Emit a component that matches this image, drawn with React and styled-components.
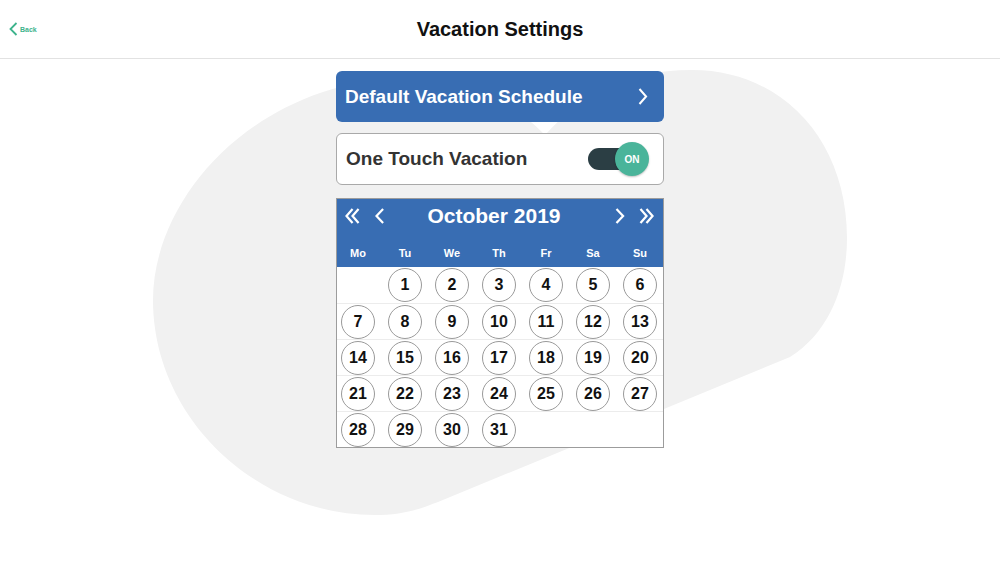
import React from "react";
import styled, { createGlobalStyle } from "styled-components";

const GlobalStyle = createGlobalStyle`
  html, body {
    margin: 0;
    padding: 0;
    background: #ffffff;
    font-family: "Liberation Sans", Arial, sans-serif;
  }
`;

const Page = styled.div`
  position: relative;
  width: 1000px;
  height: 587px;
  overflow: hidden;
  background: #ffffff;
`;

const Blob = styled.svg`
  position: absolute;
  left: 0;
  top: 0;
  width: 1000px;
  height: 587px;
  z-index: 0;
`;

const Header = styled.header`
  position: relative;
  z-index: 1;
  height: 58px;
  border-bottom: 1px solid #e2e2e2;
  background: #ffffff;
  display: grid;
  grid-template-columns: 1fr auto 1fr;
  align-items: center;
`;

const BackLink = styled.a`
  display: flex;
  align-items: center;
  gap: 2px;
  padding-left: 9px;
  color: #3db38c;
  font-size: 7px;
  font-weight: bold;
  text-decoration: none;
  cursor: pointer;
`;

const Title = styled.h1`
  margin: 0;
  font-size: 20px;
  font-weight: bold;
  color: #111111;
`;

const Content = styled.main`
  position: relative;
  z-index: 1;
  width: 328px;
  margin: 12px auto 0;
  display: flex;
  flex-direction: column;
`;

const NavButton = styled.button`
  height: 51px;
  border: none;
  border-radius: 6px;
  background: #386db3;
  color: #ffffff;
  font-family: inherit;
  font-size: 19px;
  font-weight: bold;
  display: flex;
  align-items: center;
  justify-content: space-between;
  padding: 0 14px 0 9px;
  cursor: pointer;
`;

const ToggleCard = styled.div`
  margin-top: 11px;
  height: 50px;
  border: 1px solid #a9a9a9;
  border-radius: 6px;
  background: #ffffff;
  display: flex;
  align-items: center;
  justify-content: space-between;
  padding: 0 14px 0 9px;
  font-size: 19px;
  font-weight: bold;
  color: #333333;
`;

const Switch = styled.div`
  position: relative;
  width: 61px;
  height: 34px;
  display: flex;
  align-items: center;
`;

const Track = styled.div`
  width: 53px;
  height: 22px;
  border-radius: 11px;
  background: ${(p) => (p.on ? "#2b3e44" : "#bbbbbb")};
`;

const Knob = styled.div`
  position: absolute;
  right: 0;
  top: 0;
  width: 34px;
  height: 34px;
  border-radius: 50%;
  background: #4ab49a;
  box-shadow: 0 1px 2px rgba(0, 0, 0, 0.25);
  color: #ffffff;
  font-size: 10px;
  font-weight: bold;
  display: flex;
  align-items: center;
  justify-content: center;
`;

const Calendar = styled.section`
  margin-top: 13px;
  border: 1px solid #9c9c9c;
  background: #ffffff;
  overflow: hidden;
`;

const CalHead = styled.div`
  background: #386db3;
  color: #ffffff;
`;

const MonthRow = styled.div`
  height: 34px;
  display: flex;
  align-items: center;
  padding: 0 7px 0 8px;
`;

const NavGroup = styled.div`
  display: flex;
  align-items: center;
  gap: ${(p) => p.gap}px;
`;

const MonthTitle = styled.div`
  flex: 1;
  text-align: center;
  font-size: 21px;
  font-weight: bold;
  padding-right: 14px;
`;

const Grid = styled.div`
  display: grid;
  grid-template-columns: repeat(7, 47px);
`;

const DayName = styled.div`
  height: 28px;
  padding: 6px 9px 0 4px;
  display: flex;
  align-items: center;
  justify-content: center;
  font-size: 11px;
  font-weight: bold;
`;

const Cell = styled.div`
  height: 36px;
  padding-left: 4px;
  display: flex;
  align-items: center;
  justify-content: flex-start;
  border-top: ${(p) => (p.first ? "none" : "1px solid #ececec")};
  box-sizing: border-box;
`;

const Day = styled.div`
  width: 32px;
  height: 32px;
  border-radius: 50%;
  border: 1px solid #9a9a9a;
  display: flex;
  align-items: center;
  justify-content: center;
  font-size: 16px;
  font-weight: bold;
  color: #111111;
`;

const Chevron = ({ dir = "right", double = false, w = 10, h = 15, stroke = 2.2 }) => {
  const pts = (x) =>
    dir === "right"
      ? `${x},1 ${x + w * 0.55},${h / 2} ${x},${h - 1}`
      : `${x + w * 0.55},1 ${x},${h / 2} ${x + w * 0.55},${h - 1}`;
  const width = double ? w + 6 : w;
  return (
    <svg width={width} height={h} viewBox={`0 0 ${width} ${h}`} fill="none">
      <polyline points={pts(1.5)} stroke="currentColor" strokeWidth={stroke} />
      {double && <polyline points={pts(7.5)} stroke="currentColor" strokeWidth={stroke} />}
    </svg>
  );
};

const dayNames = ["Mo", "Tu", "We", "Th", "Fr", "Sa", "Su"];

export default function App() {
  const cells = [null];
  for (let d = 1; d <= 31; d++) cells.push(d);
  while (cells.length % 7) cells.push(null);

  return (
    <Page>
      <GlobalStyle />
      <Blob viewBox="0 0 1000 587">
        <path
          d="M 545 135 C 510 100, 470 76, 405 77 C 250 84, 153 200, 153 300 C 153 420, 260 518, 380 515 C 408 514, 422 508, 438 502 L 790 357 C 830 332, 847 285, 847 238 C 847 140, 782 70, 692 70 C 622 70, 582 95, 545 135 Z"
          fill="#f1f1f1"
        />
      </Blob>
      <Header>
        <BackLink>
          <svg width="9" height="14" viewBox="0 0 9 14" fill="none">
            <polyline points="7.5,1 1.5,7 7.5,13" stroke="#3db38c" strokeWidth="1.8" />
          </svg>
          Back
        </BackLink>
        <Title>Vacation Settings</Title>
        <div />
      </Header>
      <Content>
        <NavButton>
          Default Vacation Schedule
          <Chevron dir="right" w={12} h={17} stroke={2} />
        </NavButton>
        <ToggleCard>
          One Touch Vacation
          <Switch>
            <Track on />
            <Knob>ON</Knob>
          </Switch>
        </ToggleCard>
        <Calendar>
          <CalHead>
            <MonthRow>
              <NavGroup gap={13}>
                <Chevron dir="left" double w={11} h={16} stroke={2.2} />
                <Chevron dir="left" w={12} h={16} stroke={2.2} />
              </NavGroup>
              <MonthTitle>October 2019</MonthTitle>
              <NavGroup gap={12}>
                <Chevron dir="right" w={12} h={16} stroke={2.2} />
                <Chevron dir="right" double w={11} h={16} stroke={2.2} />
              </NavGroup>
            </MonthRow>
            <Grid>
              {dayNames.map((n) => (
                <DayName key={n}>{n}</DayName>
              ))}
            </Grid>
          </CalHead>
          <Grid>
            {cells.map((d, i) => (
              <Cell key={i} first={i < 7}>
                {d && <Day>{d}</Day>}
              </Cell>
            ))}
          </Grid>
        </Calendar>
      </Content>
    </Page>
  );
}
